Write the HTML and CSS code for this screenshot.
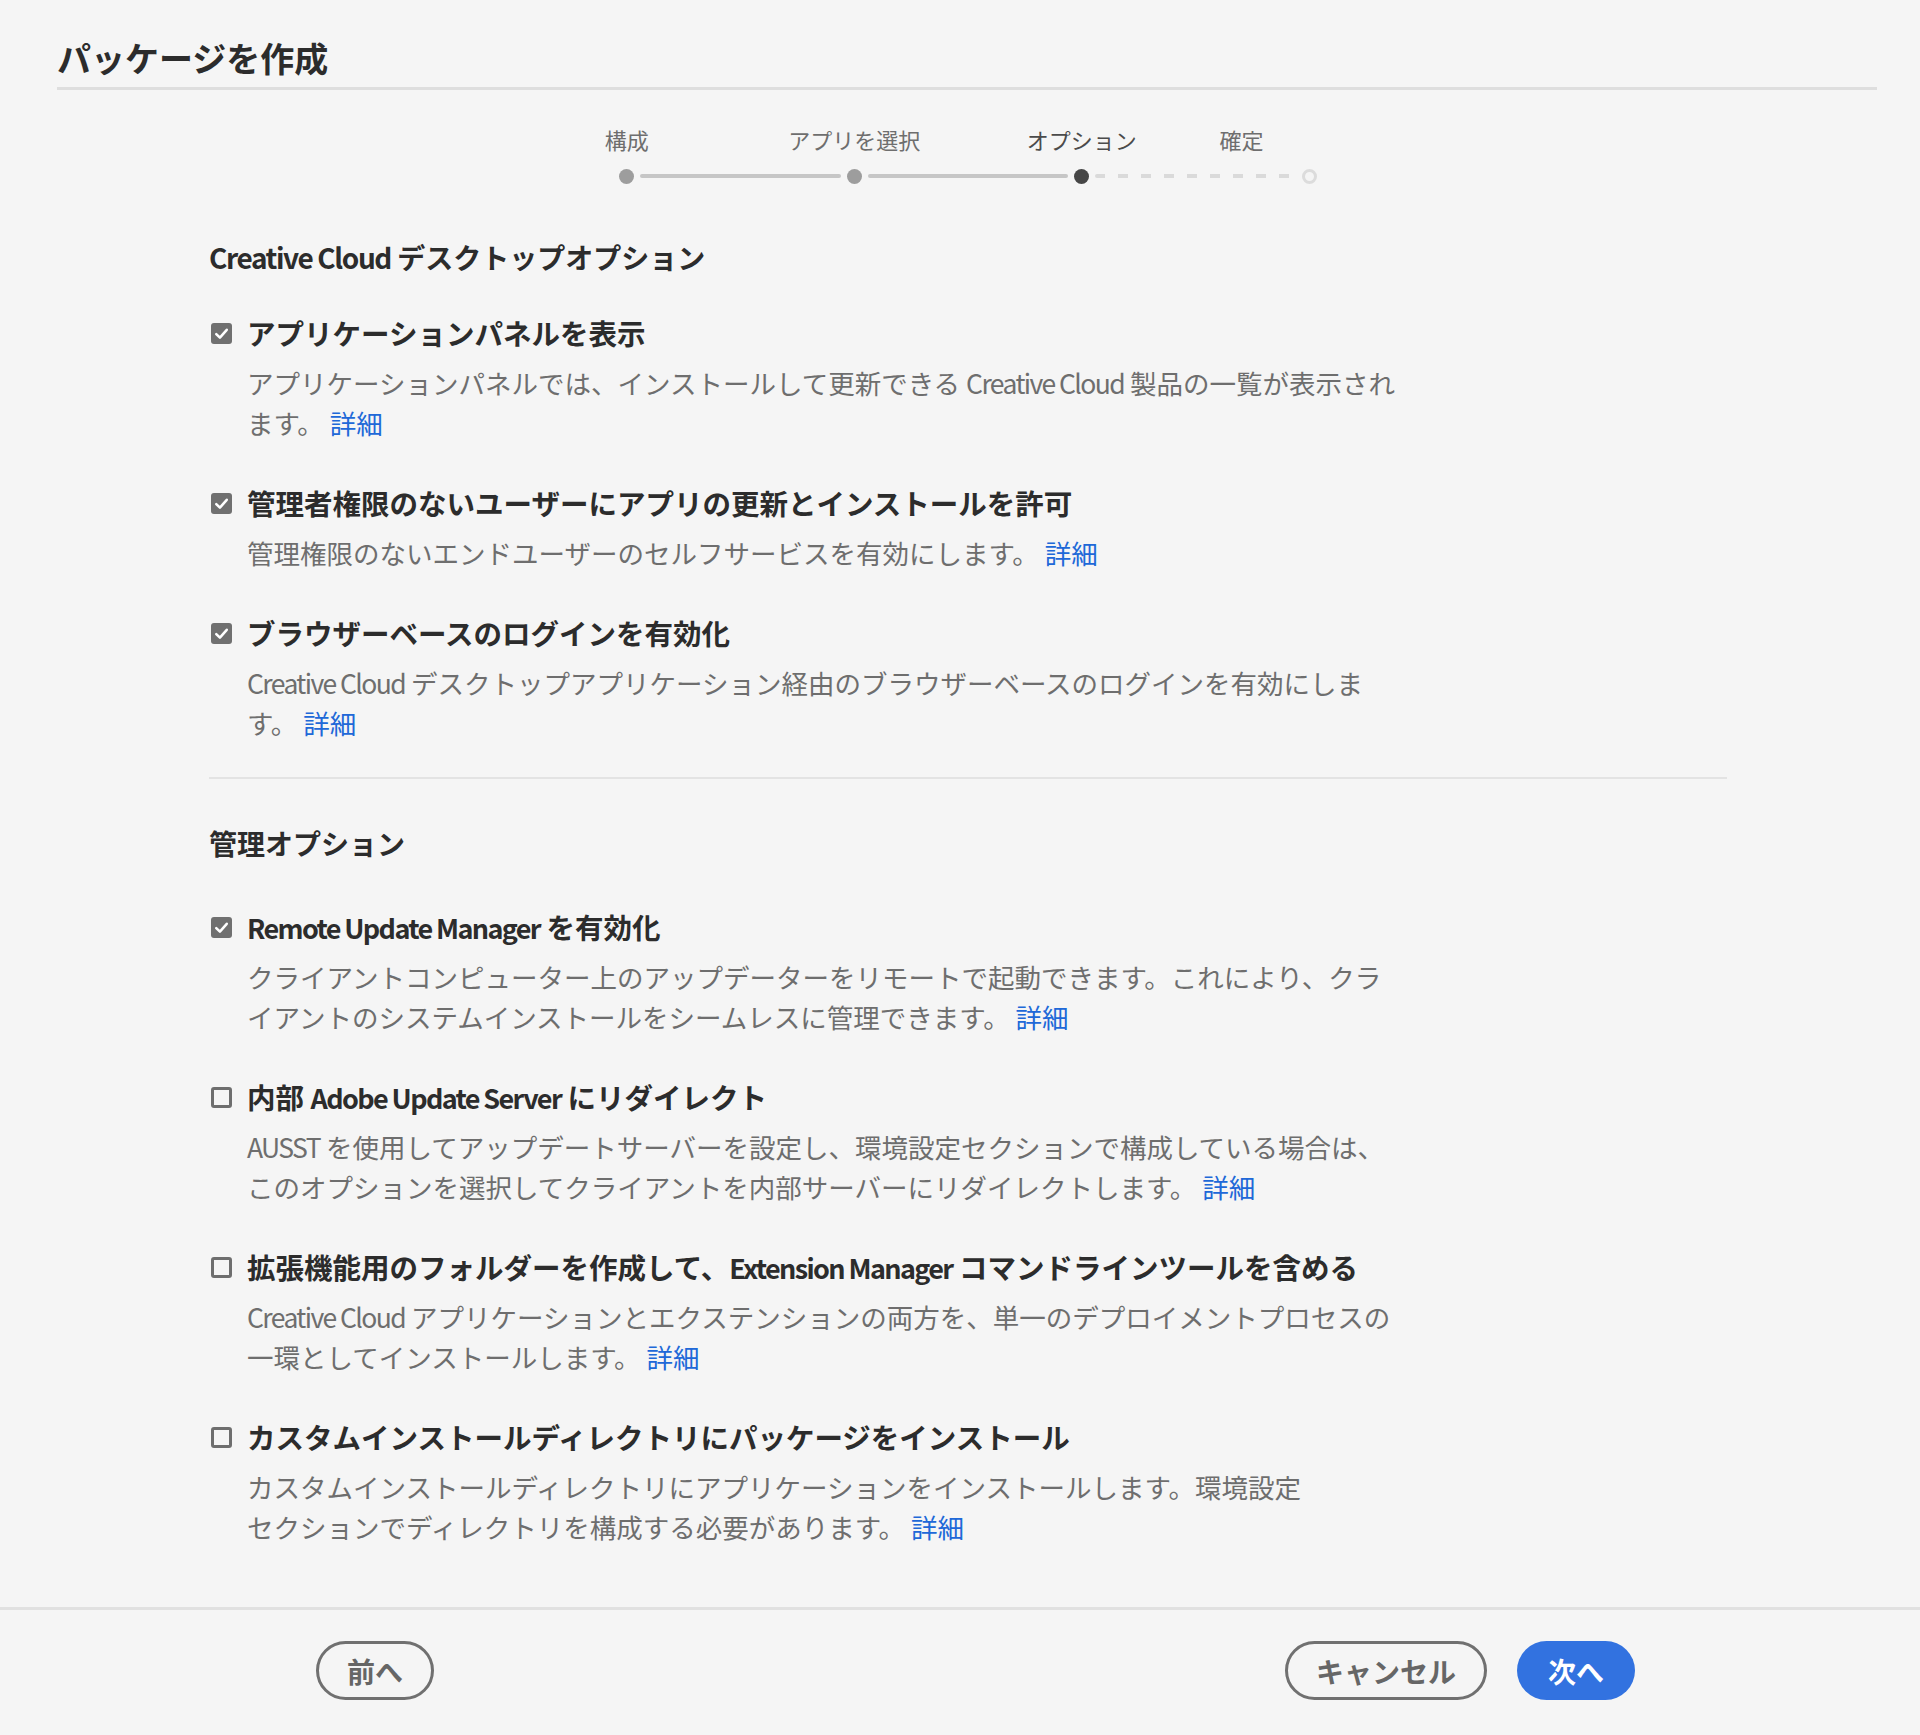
FILE: index.html
```html
<!DOCTYPE html>
<html lang="ja">
<head>
  <meta charset="UTF-8">
  <meta name="viewport" content="width=device-width, initial-scale=1.0">
  <title>パッケージを作成</title>
  <link rel="stylesheet" href="styles.css">
</head>
<body>
  <div class="page">
    <header class="page-header">
      <h1>パッケージを作成</h1>
    </header>

    <div class="stepper">
      <div class="step-labels">
        <span class="step-label">構成</span>
        <span class="step-label">アプリを選択</span>
        <span class="step-label current">オプション</span>
        <span class="step-label last">確定</span>
      </div>
      <div class="step-track">
        <span class="dot done"></span>
        <span class="bar"></span>
        <span class="dot done"></span>
        <span class="bar"></span>
        <span class="dot current"></span>
        <span class="bar todo"></span>
        <span class="dot todo"></span>
      </div>
    </div>

    <main class="options">
      <section class="option-group first">
        <h2><span class="latin">Creative Cloud</span> デスクトップオプション</h2>

        <div class="option">
          <div class="option-head">
            <span class="checkbox checked"><svg viewBox="0 0 20 20"><polyline points="5,10.5 8.5,14 15,6.5"/></svg></span>
            <span class="option-title">アプリケーションパネルを表示</span>
          </div>
          <p class="option-desc">アプリケーションパネルでは、インストールして更新できる <span class="latin">Creative Cloud</span> 製品の一覧が表示され<br>ます。 <a href="#">詳細</a></p>
        </div>

        <div class="option">
          <div class="option-head">
            <span class="checkbox checked"><svg viewBox="0 0 20 20"><polyline points="5,10.5 8.5,14 15,6.5"/></svg></span>
            <span class="option-title">管理者権限のないユーザーにアプリの更新とインストールを許可</span>
          </div>
          <p class="option-desc">管理権限のないエンドユーザーのセルフサービスを有効にします。 <a href="#">詳細</a></p>
        </div>

        <div class="option">
          <div class="option-head">
            <span class="checkbox checked"><svg viewBox="0 0 20 20"><polyline points="5,10.5 8.5,14 15,6.5"/></svg></span>
            <span class="option-title">ブラウザーベースのログインを有効化</span>
          </div>
          <p class="option-desc"><span class="latin">Creative Cloud</span> デスクトップアプリケーション経由のブラウザーベースのログインを有効にしま<br>す。 <a href="#">詳細</a></p>
        </div>
      </section>

      <hr class="group-divider">

      <section class="option-group">
        <h2>管理オプション</h2>

        <div class="option">
          <div class="option-head">
            <span class="checkbox checked"><svg viewBox="0 0 20 20"><polyline points="5,10.5 8.5,14 15,6.5"/></svg></span>
            <span class="option-title"><span class="latin">Remote Update Manager</span> を有効化</span>
          </div>
          <p class="option-desc">クライアントコンピューター上のアップデーターをリモートで起動できます。これにより、クラ<br>イアントのシステムインストールをシームレスに管理できます。 <a href="#">詳細</a></p>
        </div>

        <div class="option">
          <div class="option-head">
            <span class="checkbox"></span>
            <span class="option-title">内部 <span class="latin">Adobe Update Server</span> にリダイレクト</span>
          </div>
          <p class="option-desc"><span class="latin">AUSST</span> を使用してアップデートサーバーを設定し、環境設定セクションで構成している場合は、<br>このオプションを選択してクライアントを内部サーバーにリダイレクトします。 <a href="#">詳細</a></p>
        </div>

        <div class="option">
          <div class="option-head">
            <span class="checkbox"></span>
            <span class="option-title">拡張機能用のフォルダーを作成して、<span class="latin">Extension Manager</span> コマンドラインツールを含める</span>
          </div>
          <p class="option-desc"><span class="latin">Creative Cloud</span> アプリケーションとエクステンションの両方を、単一のデプロイメントプロセスの<br>一環としてインストールします。 <a href="#">詳細</a></p>
        </div>

        <div class="option">
          <div class="option-head">
            <span class="checkbox"></span>
            <span class="option-title">カスタムインストールディレクトリにパッケージをインストール</span>
          </div>
          <p class="option-desc">カスタムインストールディレクトリにアプリケーションをインストールします。環境設定<br>セクションでディレクトリを構成する必要があります。 <a href="#">詳細</a></p>
        </div>
      </section>
    </main>

    <footer class="page-footer">
      <button class="btn btn-secondary">前へ</button>
      <div class="footer-right">
        <button class="btn btn-secondary">キャンセル</button>
        <button class="btn btn-primary">次へ</button>
      </div>
    </footer>
  </div>
</body>
</html>
```

FILE: styles.css
```css
body {
  margin: 0;
  padding: 0;
  background: #f5f5f5;
  font-family: "Noto Sans CJK JP", "Noto Sans", sans-serif;
  color: #2c2c2c;
}

.page {
  width: 1920px;
  min-height: 1735px;
  display: flex;
  flex-direction: column;
}

/* latin words are set narrower, like the condensed UI face */
.latin {
  letter-spacing: -0.05em;
}

.page-header {
  margin: 0 43px 0 57px;
  padding-top: 36px;
  padding-bottom: 7px;
  border-bottom: 3px solid #dedede;
}

.page-header h1 {
  margin: 0;
  font-size: 34px;
  line-height: 44px;
  font-weight: 700;
  color: #2c2c2c;
}

/* stepper */
.stepper {
  margin-top: 34px;
}

.step-labels {
  display: grid;
  grid-template-columns: repeat(4, 227.5px);
  margin-left: 513px;
}

.step-label {
  font-size: 22px;
  line-height: 30px;
  color: #6e6e6e;
  text-align: center;
}

.step-label.current {
  color: #4b4b4b;
}

.step-label.last {
  justify-self: start;
  margin-left: 24px;
}

.step-track {
  display: flex;
  align-items: center;
  gap: 6px;
  height: 16px;
  margin: 14px 0 0 619px;
}

.dot {
  width: 15px;
  height: 15px;
  border-radius: 50%;
  box-sizing: border-box;
  flex: 0 0 auto;
}

.dot.done {
  background: #9d9d9d;
}

.dot.current {
  background: #464646;
}

.dot.todo {
  border: 3px solid #dcdcdc;
  background: #f5f5f5;
}

.bar {
  width: 200.5px;
  height: 4px;
  border-radius: 2px;
  background: #c6c6c6;
}

.bar.todo {
  background: repeating-linear-gradient(to right, #dadada 0 10px, transparent 10px 23px);
}

/* options */
.options {
  margin-left: 209px;
  width: 1518px;
  padding-top: 53px;
  padding-bottom: 60px;
}

.option-group h2 {
  margin: 0 0 44px;
  font-size: 28px;
  line-height: 40px;
  font-weight: 700;
  color: #2c2c2c;
}

.option-group.first h2 {
  margin-bottom: 36px;
}

.option {
  margin-bottom: 40px;
}

.option:last-child {
  margin-bottom: 0;
}

.option-head {
  display: flex;
  align-items: center;
  gap: 15px;
  height: 40px;
}

.checkbox {
  width: 21px;
  height: 21px;
  margin-left: 2px;
  box-sizing: border-box;
  border: 3px solid #6e6e6e;
  border-radius: 3px;
  flex: 0 0 auto;
  display: flex;
}

.checkbox.checked {
  background: #707070;
  border: none;
}

.checkbox svg {
  width: 21px;
  height: 21px;
  fill: none;
  stroke: #fff;
  stroke-width: 2.4;
  stroke-linecap: round;
  stroke-linejoin: round;
}

.option-title {
  font-size: 28.5px;
  line-height: 40px;
  font-weight: 700;
  color: #2c2c2c;
  white-space: nowrap;
}

.option-title .latin {
  font-size: 27px;
  letter-spacing: -0.06em;
}

.option-desc {
  margin: 10px 0 0 38px;
  font-size: 26.5px;
  line-height: 40px;
  color: #6e6e6e;
  white-space: nowrap;
}

.option-desc .latin {
  letter-spacing: -0.06em;
}

.option-desc a {
  color: #2068d8;
  text-decoration: none;
}

.group-divider {
  margin: 34px 0 44px;
  border: none;
  height: 2px;
  background: #e3e3e3;
}

/* footer */
.page-footer {
  border-top: 3px solid #e1e1e1;
  display: flex;
  justify-content: space-between;
  align-items: center;
  padding: 31px 285px 33px 316px;
}

.footer-right {
  display: flex;
  gap: 30px;
}

.btn {
  height: 59px;
  padding: 0 28px;
  border-radius: 30px;
  border: 3px solid transparent;
  font-family: inherit;
  font-size: 28px;
  font-weight: 700;
  line-height: 1;
  cursor: pointer;
}

.btn-secondary {
  background: transparent;
  border-color: #707070;
  color: #666;
}

.btn-primary {
  background: #3272e0;
  color: #fff;
}
```
